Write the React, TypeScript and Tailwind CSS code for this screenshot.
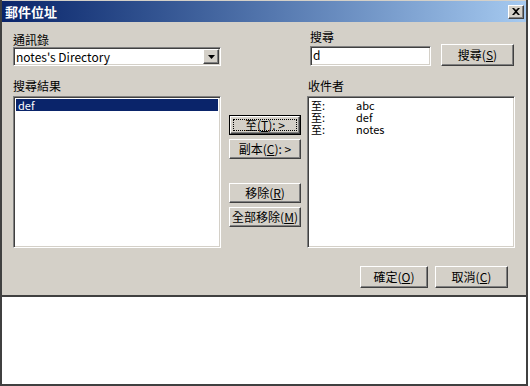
import React from 'react';

const sunken =
  'border border-t-[#808080] border-l-[#808080] border-b-white border-r-white shadow-[inset_1px_1px_0_#404040,inset_-1px_-1px_0_#d4d0c8] bg-white';
const raised =
  'border border-t-white border-l-white border-b-[#404040] border-r-[#404040] shadow-[inset_-1px_-1px_0_#808080,inset_1px_1px_0_#d4d0c8] bg-[#d4d0c8]';

function Btn({
  children,
  className = '',
  focused = false,
}: {
  children: React.ReactNode;
  className?: string;
  focused?: boolean;
}) {
  if (focused) {
    return (
      <div className={`border border-black ${className}`}>
        <div className={`${raised} h-full flex items-center justify-center p-[2px]`}>
          <div className="w-full h-full flex items-center justify-center border border-dotted border-black text-[12px] leading-[14px]">
            {children}
          </div>
        </div>
      </div>
    );
  }
  return (
    <div className={`${raised} flex items-center justify-center text-[12px] leading-[14px] ${className}`}>
      {children}
    </div>
  );
}

export default function App() {
  return (
    <div className="w-[528px] h-[386px] bg-white font-['Noto_Sans_CJK_TC','Noto_Sans_CJK_SC',sans-serif] text-black">
      <div className="border-x-2 border-b-2 border-[#404040] h-[386px] flex flex-col">
        {/* Title bar */}
        <div className="h-[22px] border-t border-[#d4d0c8] bg-linear-to-r from-[#0a246a] to-[#a6caf0] flex items-center justify-between pl-[3px] pr-[2px]">
          <span className="text-white font-bold text-[13px] leading-[15px]">郵件位址</span>
          <div className={`${raised} w-[16px] h-[14px] flex items-center justify-center`}>
            <svg width="8" height="7" viewBox="0 0 8 7">
              <path d="M0 0h2l2 2 2-2h2L5 3.5 8 7H6L4 5 2 7H0l3-3.5z" fill="black" />
            </svg>
          </div>
        </div>

        {/* Body */}
        <div className="bg-[#d4d0c8] h-[275px] pl-[11px] pt-[8px] border-b-2 border-[#404040]">
          {/* Row 1 */}
          <div className="flex items-end">
            <div className="w-[208px]">
              <div className="text-[12px] leading-[14px] h-[14px]">通訊錄</div>
              <div className={`${sunken} h-[19px] flex items-center justify-between pl-[2px] pr-[1px]`}>
                <span className="text-[12px] leading-[14px]">notes's Directory</span>
                <div className={`${raised} w-[16px] h-[15px] flex items-center justify-center`}>
                  <svg width="7" height="4" viewBox="0 0 7 4">
                    <path d="M0 0h7L3.5 4z" fill="black" />
                  </svg>
                </div>
              </div>
            </div>
            <div className="ml-[89px]">
              <div className="text-[12px] leading-[14px] h-[14px]">搜尋</div>
              <div className="flex items-end">
                <div className={`${sunken} w-[121px] h-[20px] pl-[2px] text-[12px] leading-[16px]`}>d</div>
                <Btn className="ml-[10px] w-[73px] h-[22px]">
                  搜尋(<u>S</u>)
                </Btn>
              </div>
            </div>
          </div>

          {/* Row 2 */}
          <div className="flex mt-[13px]">
            <div className="w-[208px]">
              <div className="text-[12px] leading-[14px] h-[17px]">搜尋結果</div>
              <div className={`${sunken} h-[152px] p-[2px]`}>
                <div className="bg-[#0a246a] text-white text-[11px] leading-[12px] h-[12px] pl-[2px]">def</div>
              </div>
            </div>
            <div className="ml-[8px] w-[72px] flex flex-col pt-[36px]">
              <Btn focused className="h-[20px]">
                至(<u>T</u>): &gt;
              </Btn>
              <Btn className="h-[20px] mt-[4px]">
                副本(<u>C</u>): &gt;
              </Btn>
              <Btn className="h-[20px] mt-[24px]">
                移除(<u>R</u>)
              </Btn>
              <Btn className="h-[20px] mt-[4px]">
                全部移除(<u>M</u>)
              </Btn>
            </div>
            <div className="ml-[6px] w-[208px]">
              <div className="text-[12px] leading-[14px] h-[17px] pl-[1px]">收件者</div>
              <div className={`${sunken} h-[152px] pt-[2px] pl-[3px]`}>
                {['abc', 'def', 'notes'].map((n) => (
                  <div key={n} className="flex text-[11px] leading-[12px] h-[12px]">
                    <span className="w-[45px]">至:</span>
                    <span>{n}</span>
                  </div>
                ))}
              </div>
            </div>
          </div>

          {/* Row 3 */}
          <div className="flex justify-end mt-[18px] pr-[18px] gap-[7px]">
            <Btn className="w-[68px] h-[22px]">
              確定(<u>O</u>)
            </Btn>
            <Btn className="w-[73px] h-[22px]">
              取消(<u>C</u>)
            </Btn>
          </div>
        </div>

        {/* Lower white area */}
        <div className="flex-1 bg-white" />
      </div>
    </div>
  );
}
